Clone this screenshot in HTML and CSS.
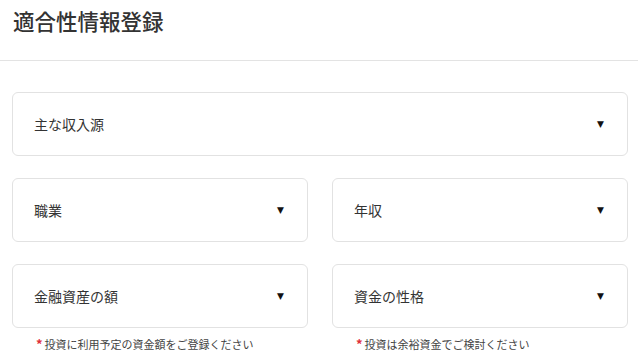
FILE: index.html
```html
<!DOCTYPE html>
<html lang="ja">
<head>
    <meta charset="UTF-8">
    <meta name="viewport" content="width=device-width, initial-scale=1.0">
    <title>適合性情報登録</title>
    <link rel="stylesheet" href="styles.css">
</head>
<body>
    <header class="page-header">
        <h1 class="page-title">適合性情報登録</h1>
    </header>

    <div class="form">
        <div class="row">
            <div class="field">
                <div class="select">
                    <span class="select-label">主な収入源</span>
                    <span class="select-arrow">▼</span>
                </div>
            </div>
        </div>
        <div class="row two-col">
            <div class="field">
                <div class="select">
                    <span class="select-label">職業</span>
                    <span class="select-arrow">▼</span>
                </div>
            </div>
            <div class="field">
                <div class="select">
                    <span class="select-label">年収</span>
                    <span class="select-arrow">▼</span>
                </div>
            </div>
        </div>
        <div class="row two-col">
            <div class="field">
                <div class="select">
                    <span class="select-label">金融資産の額</span>
                    <span class="select-arrow">▼</span>
                </div>
                <p class="note"><span class="mark">*</span>投資に利用予定の資金額をご登録ください</p>
            </div>
            <div class="field">
                <div class="select">
                    <span class="select-label">資金の性格</span>
                    <span class="select-arrow">▼</span>
                </div>
                <p class="note"><span class="mark">*</span>投資は余裕資金でご検討ください</p>
            </div>
        </div>
    </div>
</body>
</html>
```

FILE: styles.css
```css
body {
    margin: 0;
    font-family: 'Noto Sans CJK JP', 'Noto Sans', sans-serif;
    background-color: #fff;
    color: #333;
}
.page-header {
    height: 61px;
    border-bottom: 1px solid #e3e3e3;
    padding-left: 13px;
    box-sizing: border-box;
}
.page-title {
    margin: 0;
    padding-top: 6px;
    font-size: 21.5px;
    font-weight: 500;
    line-height: 30px;
    color: #333;
}
.form {
    padding: 31px 10px 0 12px;
}
.row {
    margin-bottom: 22px;
}
.two-col {
    display: grid;
    grid-template-columns: 1fr 1fr;
    column-gap: 24px;
}
.select {
    height: 64px;
    box-sizing: border-box;
    border: 1px solid #e2e2e2;
    border-radius: 6px;
    display: flex;
    align-items: center;
    justify-content: space-between;
    padding: 0 23px 0 21px;
}
.select-label {
    font-size: 14px;
    color: #333;
}
.select-arrow {
    font-size: 9px;
    color: #111;
    font-family: 'DejaVu Sans', sans-serif;
}
.note {
    margin: 9px 0 0 24px;
    font-size: 11px;
    line-height: 14px;
    color: #444;
}
.mark {
    color: #e0303a;
    font-size: 13px;
    font-weight: bold;
    margin-right: 2px;
}
```
